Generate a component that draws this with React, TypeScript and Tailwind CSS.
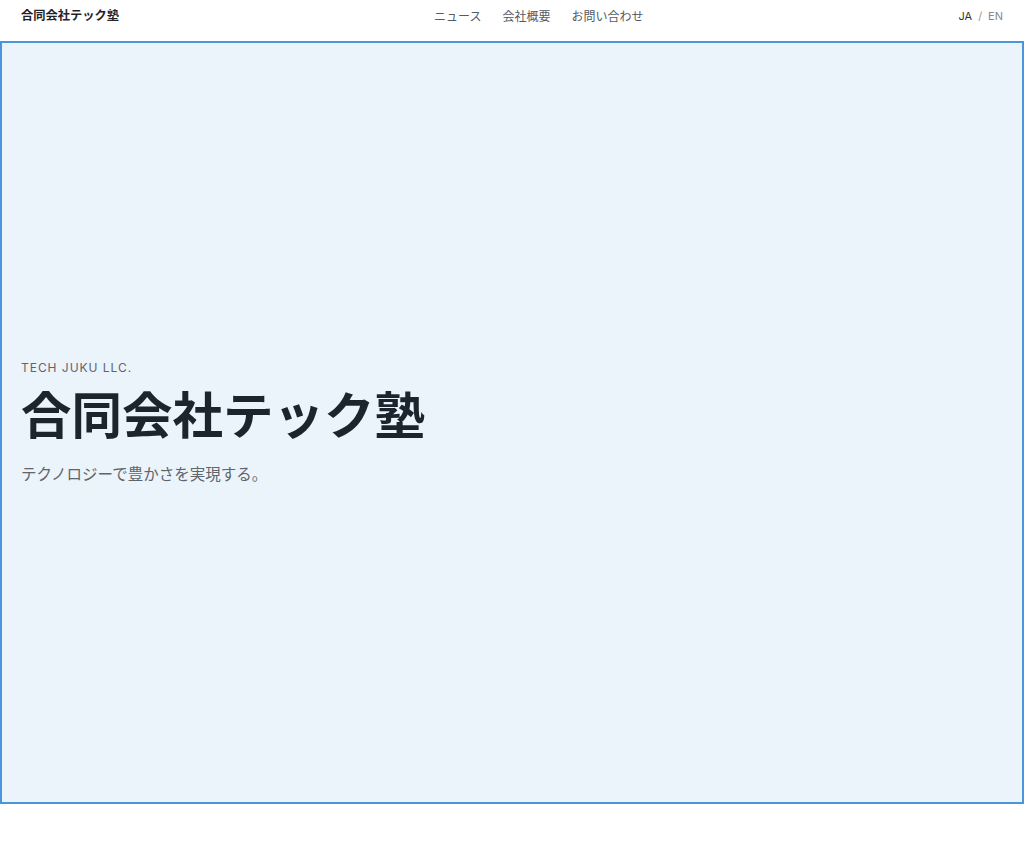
export default function App() {
    const links = ["ニュース", "会社概要", "お問い合わせ"];

    return (
        <div className="min-h-[846px] bg-white font-['Inter','Noto_Sans_CJK_JP',sans-serif]">
            <header className="h-[33px] flex items-center justify-between px-[21px]">
                <div className="text-[12.25px] font-bold text-[#1f2328]">合同会社テック塾</div>
                <nav className="flex gap-[21px] text-[12px] text-[#555b62]">
                    {links.map((label, i) => (
                        <a key={i} href="#" className="hover:text-black">{label}</a>
                    ))}
                </nav>
                <div className="flex items-center gap-[6px] text-[11px]">
                    <span className="text-[#333]">JA</span>
                    <span className="text-[#999]">/</span>
                    <span className="text-[#888]">EN</span>
                </div>
            </header>
            <section className="mt-[8px] h-[763px] border-2 border-[#4a95dc] bg-[#ebf3fb] flex flex-col justify-center px-[19px]">
                <p className="text-[12px] leading-[18px] tracking-[0.08em] text-[#5e656c]">TECH JUKU LLC.</p>
                <h1 className="mt-[9px] text-[50.5px] leading-[60px] font-bold text-[#1c252d]">合同会社テック塾</h1>
                <p className="mt-[18px] text-[15.5px] leading-[22px] text-[#5e656c]">テクノロジーで豊かさを実現する。</p>
            </section>
        </div>
    );
}
